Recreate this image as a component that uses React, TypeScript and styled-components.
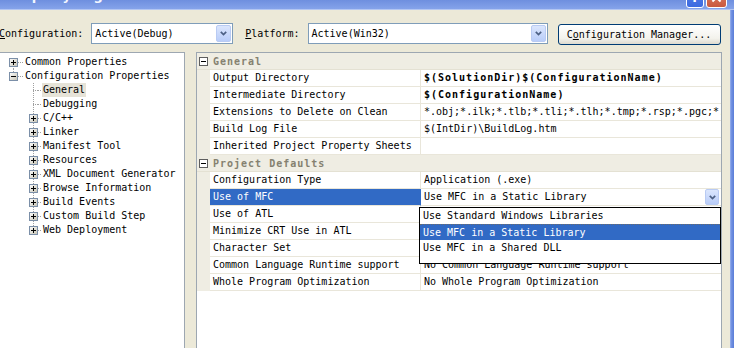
import React from "react";
import styled, { createGlobalStyle } from "styled-components";

const GlobalStyle = createGlobalStyle`
  html, body {
    margin: 0;
    padding: 0;
    background: #ece9d8;
  }
  body {
    font-family: "DejaVu Sans Mono", "Liberation Mono", monospace;
    font-size: 10px;
    color: #000;
  }
`;

const DOTS_V = "repeating-linear-gradient(to bottom, #a0a0a0 0 1px, transparent 1px 2px)";
const DOTS_H = "repeating-linear-gradient(to right, #a0a0a0 0 1px, transparent 1px 2px)";

type TreeItem = {
  label: string;
  depth: 0 | 1;
  kind: "plus" | "minus" | "leaf";
  line: "full" | "top" | "bottom";
  selected?: boolean;
};

const tree: TreeItem[] = [
  { label: "Common Properties", depth: 0, kind: "plus", line: "bottom" },
  { label: "Configuration Properties", depth: 0, kind: "minus", line: "top" },
  { label: "General", depth: 1, kind: "leaf", line: "full", selected: true },
  { label: "Debugging", depth: 1, kind: "leaf", line: "full" },
  { label: "C/C++", depth: 1, kind: "plus", line: "full" },
  { label: "Linker", depth: 1, kind: "plus", line: "full" },
  { label: "Manifest Tool", depth: 1, kind: "plus", line: "full" },
  { label: "Resources", depth: 1, kind: "plus", line: "full" },
  { label: "XML Document Generator", depth: 1, kind: "plus", line: "full" },
  { label: "Browse Information", depth: 1, kind: "plus", line: "full" },
  { label: "Build Events", depth: 1, kind: "plus", line: "full" },
  { label: "Custom Build Step", depth: 1, kind: "plus", line: "full" },
  { label: "Web Deployment", depth: 1, kind: "plus", line: "top" },
];

type Prop = { label: string; value: string; bold?: boolean };

const general: Prop[] = [
  { label: "Output Directory", value: "$(SolutionDir)$(ConfigurationName)", bold: true },
  { label: "Intermediate Directory", value: "$(ConfigurationName)", bold: true },
  {
    label: "Extensions to Delete on Clean",
    value: "*.obj;*.ilk;*.tlb;*.tli;*.tlh;*.tmp;*.rsp;*.pgc;*.pgd;*.meta;$(TargetPath)",
  },
  { label: "Build Log File", value: "$(IntDir)\\BuildLog.htm" },
  { label: "Inherited Project Property Sheets", value: "" },
];

const defaultsBefore: Prop[] = [{ label: "Configuration Type", value: "Application (.exe)" }];
// values of the rows under the open list are hidden by it
const defaultsAfter: Prop[] = [
  { label: "Use of ATL", value: "" },
  { label: "Minimize CRT Use in ATL", value: "" },
  { label: "Character Set", value: "" },
  { label: "Common Language Runtime support", value: "No Common Language Runtime support" },
  { label: "Whole Program Optimization", value: "No Whole Program Optimization" },
];

const mfcOptions = [
  "Use Standard Windows Libraries",
  "Use MFC in a Static Library",
  "Use MFC in a Shared DLL",
];

function TreeBox({ open }: { open: boolean }) {
  return (
    <svg width="9" height="9" viewBox="0 0 9 9" style={{ display: "block" }}>
      <defs>
        <linearGradient id="tb" x1="0" y1="0" x2="1" y2="1">
          <stop offset="0" stopColor="#ffffff" />
          <stop offset="1" stopColor="#c5c2b2" />
        </linearGradient>
      </defs>
      <rect x="0.5" y="0.5" width="8" height="8" fill="url(#tb)" stroke="#7b8fa8" />
      <path d="M2 4.5h5" stroke="#000" />
      {!open && <path d="M4.5 2v5" stroke="#000" />}
    </svg>
  );
}

function GridBox() {
  return (
    <svg width="9" height="9" viewBox="0 0 9 9" style={{ display: "block" }}>
      <rect x="0.5" y="0.5" width="8" height="8" fill="#fff" stroke="#5e5e5e" />
      <path d="M2 4.5h5" stroke="#000" />
    </svg>
  );
}

function DropArrow() {
  return (
    <svg width="7" height="5" viewBox="0 0 7 5" style={{ display: "block" }}>
      <path d="M0.8 0.8L3.5 3.6L6.2 0.8" fill="none" stroke="#4d6185" strokeWidth="1.7" />
    </svg>
  );
}

function App() {
  return (
    <>
      <GlobalStyle />
      <Window>
        <TitleBar>
          <TitleText>Property Pages</TitleText>
          <CaptionButtons>
            <CaptionButton $kind="help">?</CaptionButton>
            <CaptionButton $kind="close">
              <svg width="21" height="21" viewBox="0 0 21 21" style={{ display: "block" }}>
                <path d="M6 6L15 15M15 6L6 15" stroke="#fff" strokeWidth="2.2" />
              </svg>
            </CaptionButton>
          </CaptionButtons>
        </TitleBar>

        <Body>
          <Main>
            <Toolbar>
              <Field>
                <FieldLabel $shift={-1}>
                  <u>C</u>onfiguration:
                </FieldLabel>
                <Combo $width={142}>
                  <ComboText>Active(Debug)</ComboText>
                  <ComboArrow>
                    <DropArrow />
                  </ComboArrow>
                </Combo>
              </Field>
              <Field>
                <FieldLabel>
                  <u>P</u>latform:
                </FieldLabel>
                <Combo $width={240}>
                  <ComboText>Active(Win32)</ComboText>
                  <ComboArrow>
                    <DropArrow />
                  </ComboArrow>
                </Combo>
              </Field>
              <PushButton>
                C<u>o</u>nfiguration Manager...
              </PushButton>
            </Toolbar>

            <Panels>
              <TreePanel>
                {tree.map((item) => (
                  <TreeRow key={item.label}>
                    <Expander $depth={item.depth} $line={item.line}>
                      {item.kind === "leaf" ? <LeafStub /> : <TreeBox open={item.kind === "minus"} />}
                    </Expander>
                    <Stub $width={item.depth ? 4 : 6} />
                    <TreeLabel $selected={item.selected}>{item.label}</TreeLabel>
                  </TreeRow>
                ))}
              </TreePanel>

              <GridPanel>
                <CategoryRow>
                  <Gutter>
                    <GridBox />
                  </Gutter>
                  <CategoryText>General</CategoryText>
                </CategoryRow>
                {general.map((p) => (
                  <PropRow key={p.label}>
                    <Gutter />
                    <LabelCell>{p.label}</LabelCell>
                    <ValueCell $bold={p.bold}>{p.value}</ValueCell>
                  </PropRow>
                ))}
                <CategoryRow>
                  <Gutter>
                    <GridBox />
                  </Gutter>
                  <CategoryText>Project Defaults</CategoryText>
                </CategoryRow>
                {defaultsBefore.map((p) => (
                  <PropRow key={p.label}>
                    <Gutter />
                    <LabelCell>{p.label}</LabelCell>
                    <ValueCell>{p.value}</ValueCell>
                  </PropRow>
                ))}
                <PropRow>
                  <Gutter />
                  <LabelCell $selected>Use of MFC</LabelCell>
                  <ValueCell $editing>
                    <span>Use MFC in a Static Library</span>
                    <CellArrow>
                      <DropArrow />
                    </CellArrow>
                    <DropList>
                      {mfcOptions.map((o, i) => (
                        <DropItem key={o} $selected={i === 1}>
                          {o}
                        </DropItem>
                      ))}
                    </DropList>
                  </ValueCell>
                </PropRow>
                {defaultsAfter.map((p) => (
                  <PropRow key={p.label}>
                    <Gutter />
                    <LabelCell>{p.label}</LabelCell>
                    <ValueCell>{p.value}</ValueCell>
                  </PropRow>
                ))}
              </GridPanel>
            </Panels>
          </Main>
          <FrameEdge />
        </Body>
      </Window>
    </>
  );
}

const Window = styled.div`
  width: 734px;
  height: 348px;
  overflow: hidden;
  display: flex;
  flex-direction: column;
  background: #ece9d8;
`;

const TitleBar = styled.div`
  flex: none;
  height: 9px;
  display: flex;
  align-items: flex-start;
  overflow: hidden;
  background: linear-gradient(to bottom, #6e8fdf, #85a3ea);
  border-bottom: 1px solid #b3c6f2;
`;

const TitleText = styled.div`
  margin: -11px 0 0 7px;
  font-family: "DejaVu Sans", "Liberation Sans", sans-serif;
  font-weight: bold;
  font-size: 13px;
  line-height: 13px;
  color: #f4f7ff;
  white-space: nowrap;
`;

const CaptionButtons = styled.div`
  margin-left: auto;
  margin-right: 7px;
  display: flex;
  gap: 2px;
`;

const CaptionButton = styled.div<{ $kind: "help" | "close" }>`
  margin-top: -13px;
  width: ${(p) => (p.$kind === "help" ? 18 : 21)}px;
  height: 21px;
  box-sizing: border-box;
  border: 1px solid #ffffff;
  border-radius: 3px;
  display: flex;
  align-items: center;
  justify-content: center;
  overflow: hidden;
  color: #fff;
  font-family: "DejaVu Sans", sans-serif;
  font-weight: bold;
  font-size: 13px;
  background: ${(p) =>
    p.$kind === "help"
      ? "linear-gradient(to bottom, #5a82e8, #3c6ae0)"
      : "linear-gradient(to bottom, #e0866e, #c9583d)"};
`;

const Body = styled.div`
  flex: 1;
  min-height: 0;
  display: flex;
`;

const Main = styled.div`
  flex: 1;
  min-width: 0;
  display: flex;
  flex-direction: column;
  padding-top: 13px;
`;

const FrameEdge = styled.div`
  flex: none;
  width: 4px;
  background: linear-gradient(to right, #9bb3ee, #6f8fe0 40%, #5b7ed8);
`;

const Toolbar = styled.div`
  flex: none;
  height: 22px;
  display: flex;
  align-items: flex-start;
  gap: 12px;
`;

const Field = styled.div`
  display: flex;
  gap: 8px;
`;

const FieldLabel = styled.div<{ $shift?: number }>`
  margin-left: ${(p) => p.$shift ?? 0}px;
  line-height: 21px;
  white-space: nowrap;
`;

const Combo = styled.div<{ $width: number }>`
  width: ${(p) => p.$width}px;
  height: 21px;
  box-sizing: border-box;
  border: 1px solid #7f9db9;
  background: #ffffff;
  display: flex;
  align-items: center;
  padding-left: 3px;
`;

const ComboText = styled.span`
  white-space: nowrap;
`;

const ComboArrow = styled.div`
  margin: 0 1px 0 auto;
  width: 15px;
  height: 17px;
  box-sizing: border-box;
  border: 1px solid #b9cbf3;
  border-radius: 2px;
  background: linear-gradient(to bottom, #dbe6fd, #b9cdf9);
  display: flex;
  align-items: center;
  justify-content: center;
`;

const PushButton = styled.div`
  margin: 1px 0 0 -2px;
  width: 163px;
  height: 21px;
  box-sizing: border-box;
  border: 1px solid #003c74;
  border-radius: 3px;
  background: linear-gradient(to bottom, #ffffff, #f3f2ec 70%, #dedbcf);
  display: flex;
  align-items: center;
  justify-content: center;
  white-space: nowrap;
`;

const Panels = styled.div`
  flex: 1;
  min-height: 0;
  margin-top: 7px;
  display: flex;
  gap: 11px;
`;

const TreePanel = styled.div`
  flex: none;
  width: 185px;
  box-sizing: border-box;
  border: 1px solid #9da7b1;
  border-left: none;
  border-bottom: none;
  background: #ffffff;
  padding-top: 2px;
`;

const TreeRow = styled.div`
  height: 14px;
  display: flex;
  align-items: center;
`;

const Expander = styled.div<{ $depth: number; $line: "full" | "top" | "bottom" }>`
  flex: none;
  width: 9px;
  height: 14px;
  margin-left: ${(p) => (p.$depth ? 29 : 9)}px;
  display: flex;
  align-items: center;
  background-image: ${DOTS_V};
  background-repeat: no-repeat;
  background-size: 1px ${(p) => (p.$line === "full" ? 14 : 7)}px;
  background-position: 4px ${(p) => (p.$line === "bottom" ? 7 : 0)}px;
`;

const LeafStub = styled.div`
  margin-left: 4px;
  width: 5px;
  height: 1px;
  background-image: ${DOTS_H};
`;

const Stub = styled.div<{ $width: number }>`
  flex: none;
  width: ${(p) => p.$width}px;
  height: 1px;
  background-image: ${DOTS_H};
`;

const TreeLabel = styled.div<{ $selected?: boolean }>`
  padding: 0 1px;
  line-height: 14px;
  white-space: nowrap;
  background: ${(p) => (p.$selected ? "#e6e3d8" : "transparent")};
`;

const GridPanel = styled.div`
  flex: none;
  width: 526px;
  box-sizing: border-box;
  border: 1px solid #9da7b1;
  border-bottom: none;
  background: #ffffff;
`;

const CategoryRow = styled.div`
  height: 17px;
  box-sizing: border-box;
  display: flex;
  align-items: center;
  background: #efede3;
  border-bottom: 1px solid #e4e1d3;
`;

const Gutter = styled.div`
  flex: none;
  align-self: stretch;
  width: 13px;
  background: #efede3;
  display: flex;
  align-items: center;
  padding-left: 2px;
  box-sizing: border-box;
`;

const CategoryText = styled.div`
  padding-left: 3px;
  font-weight: bold;
  letter-spacing: 1px;
  color: #858170;
  white-space: nowrap;
`;

const PropRow = styled.div`
  height: 17px;
  display: flex;
`;

const LabelCell = styled.div<{ $selected?: boolean }>`
  flex: none;
  width: 211px;
  box-sizing: border-box;
  padding-left: 3px;
  line-height: 16px;
  white-space: nowrap;
  overflow: hidden;
  border-right: 1px solid ${(p) => (p.$selected ? "#316ac5" : "#e9e6da")};
  border-bottom: 1px solid #e9e6da;
  background: ${(p) => (p.$selected ? "#316ac5" : "#ffffff")};
  color: ${(p) => (p.$selected ? "#ffffff" : "#000000")};
`;

const ValueCell = styled.div<{ $bold?: boolean; $editing?: boolean }>`
  flex: 1;
  min-width: 0;
  position: relative;
  box-sizing: border-box;
  padding-left: 3px;
  line-height: 16px;
  white-space: nowrap;
  overflow: ${(p) => (p.$editing ? "visible" : "hidden")};
  display: flex;
  align-items: center;
  border-bottom: 1px solid #e9e6da;
  font-weight: ${(p) => (p.$bold ? "bold" : "normal")};
  letter-spacing: ${(p) => (p.$bold ? 1 : 0)}px;
`;

const CellArrow = styled(ComboArrow)`
  margin: 0 2px 0 auto;
  width: 14px;
  height: 16px;
`;

const DropList = styled.div`
  position: absolute;
  z-index: 2;
  top: 18px;
  left: -2px;
  width: 302px;
  height: 57px;
  box-sizing: border-box;
  border: 1px solid #000000;
  background: #ffffff;
`;

const DropItem = styled.div<{ $selected?: boolean }>`
  height: 16px;
  box-sizing: border-box;
  padding-left: 3px;
  background: ${(p) => (p.$selected ? "#316ac5" : "#ffffff")};
  color: ${(p) => (p.$selected ? "#ffffff" : "#000000")};
  border-top: ${(p) => (p.$selected ? "1px dotted #6b6b6b" : "none")};
  line-height: ${(p) => (p.$selected ? 15 : 16)}px;
`;

export default App;
